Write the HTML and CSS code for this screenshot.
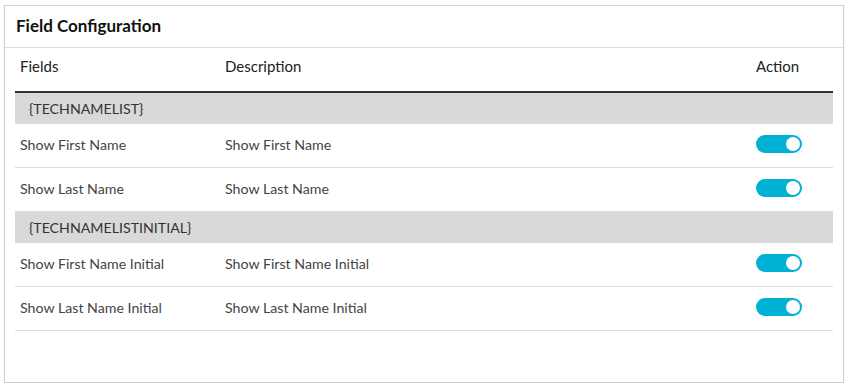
FILE: index.html
```html
<!DOCTYPE html>
<html lang="en">
<head>
    <meta charset="UTF-8">
    <title>Field Configuration</title>
    <link rel="stylesheet" href="styles.css">
</head>
<body>
<div class="card">
    <div class="card-title">Field Configuration</div>
    <div class="card-body">
        <table class="fields">
            <thead>
                <tr>
                    <th class="col-field">Fields</th>
                    <th class="col-desc">Description</th>
                    <th class="col-action">Action</th>
                </tr>
            </thead>
            <tbody>
                <tr class="group"><td colspan="3">{TECHNAMELIST}</td></tr>
                <tr>
                    <td>Show First Name</td>
                    <td>Show First Name</td>
                    <td><span class="toggle"></span></td>
                </tr>
                <tr>
                    <td>Show Last Name</td>
                    <td>Show Last Name</td>
                    <td><span class="toggle"></span></td>
                </tr>
                <tr class="group"><td colspan="3">{TECHNAMELISTINITIAL}</td></tr>
                <tr>
                    <td>Show First Name Initial</td>
                    <td>Show First Name Initial</td>
                    <td><span class="toggle"></span></td>
                </tr>
                <tr>
                    <td>Show Last Name Initial</td>
                    <td>Show Last Name Initial</td>
                    <td><span class="toggle"></span></td>
                </tr>
            </tbody>
        </table>
    </div>
</div>
</body>
</html>
```

FILE: styles.css
```css
/* Field configuration card */

body {
    font-family: Lato, "Open Sans", sans-serif;
    background-color: #fff;
    margin: 0;
    padding: 5px 5px 0 4px;
    color: #444;
}
.card {
    border: 1px solid #cfcfcf;
    height: 378px;
    box-sizing: border-box;
    box-shadow: 0 1px 2px rgba(0,0,0,0.08);
}
.card-title {
    height: 41px;
    line-height: 40px;
    padding-left: 11px;
    font-size: 17px;
    font-weight: bold;
    color: #111;
    border-bottom: 1px solid #dcdcdc;
}
.card-body {
    padding: 0 10px;
}
.fields {
    width: 100%;
    border-collapse: collapse;
    font-size: 14.2px;
}
.fields th {
    text-align: left;
    font-weight: normal;
    font-size: 15px;
    color: #222;
    height: 35px;
    padding: 0 5px 8px 5px;
    border-bottom: 2px solid #333;
}
.col-field { width: 195px; }
.col-action { width: 72px; }
.fields td {
    height: 40px;
    padding: 0 5px 3px 5px;
    border-bottom: 1px solid #dcdcdc;
}
.fields tr.group td {
    height: 31px;
    padding: 0 14px;
    background-color: #d9d9d9;
    border-bottom: none;
    color: #333;
}
.toggle {
    display: block;
    position: relative;
    width: 46px;
    height: 18px;
    border-radius: 9px;
    background-color: #00b1d6;
}
.toggle::after {
    content: "";
    position: absolute;
    right: 2px;
    top: 2px;
    width: 14px;
    height: 14px;
    border-radius: 50%;
    background-color: #fff;
}
```
